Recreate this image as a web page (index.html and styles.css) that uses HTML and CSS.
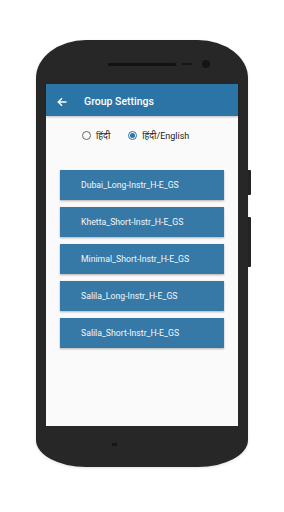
FILE: index.html
```html
<!DOCTYPE html>
<html>
<head>
<meta charset="utf-8">
<link rel="stylesheet" href="styles.css">
</head>
<body>
<div class="phone">
  <div class="speaker-row">
    <span class="speaker"></span>
    <span class="sensor"></span>
    <span class="camera"></span>
  </div>
  <span class="side-btn side-btn-1"></span>
  <span class="side-btn side-btn-2"></span>
  <div class="screen">
    <div class="appbar">
      <svg class="back" width="10" height="10" viewBox="0 0 10 10"><path d="M9.5 5H1.2M5 1.2L1.2 5L5 8.8" fill="none" stroke="#fff" stroke-width="1.4"/></svg>
      <span class="title">Group Settings</span>
    </div>
    <div class="radios">
      <label class="radio"><span class="dot"></span>हिंदी</label>
      <label class="radio"><span class="dot on"></span>हिंदी/English</label>
    </div>
    <div class="list">
      <div class="item">Dubai_Long-Instr_H-E_GS</div>
      <div class="item">Khetta_Short-Instr_H-E_GS</div>
      <div class="item">Minimal_Short-Instr_H-E_GS</div>
      <div class="item">Salila_Long-Instr_H-E_GS</div>
      <div class="item">Salila_Short-Instr_H-E_GS</div>
    </div>
  </div>
  <div class="chin"><span class="mic"></span></div>
</div>
</body>
</html>
```
FILE: styles.css
```css
html, body {
  margin: 0;
  padding: 0;
  background: #ffffff;
}
body {
  width: 284px;
  height: 512px;
  overflow: hidden;
  font-family: Roboto, "Noto Sans", "Liberation Sans", sans-serif;
}
.phone {
  position: relative;
  margin: 40px 0 0 36px;
  width: 212px;
  height: 427px;
  background: #272727;
  border-radius: 50px 50px 50px 50px / 38px 38px 27px 27px;
  display: flex;
  flex-direction: column;
  align-items: center;
  box-shadow: 0 1px 3px rgba(0,0,0,0.12);
}
.speaker-row {
  height: 44px;
  width: 100%;
  display: flex;
  align-items: center;
  padding-left: 72px;
  box-sizing: border-box;
  padding-top: 4px;
}
.speaker {
  width: 68px;
  height: 3px;
  background: #121212;
  border-radius: 1px;
}
.sensor {
  width: 10px;
  height: 2px;
  background: #141414;
  margin-left: 6px;
  border-radius: 1px;
}
.camera {
  width: 8px;
  height: 8px;
  border-radius: 50%;
  background: #151515;
  margin-left: 10px;
}
.side-btn {
  position: absolute;
  right: -3px;
  width: 3px;
  background: #232323;
  border-radius: 0 1px 1px 0;
}
.side-btn-1 { top: 130px; height: 25px; }
.side-btn-2 { top: 177px; height: 50px; }
.screen {
  width: 192px;
  height: 342px;
  background: #fafafa;
  display: flex;
  flex-direction: column;
}
.appbar {
  height: 32px;
  box-sizing: border-box;
  padding-top: 3px;
  background: #2b74a6;
  display: flex;
  align-items: center;
  color: #fff;
  box-shadow: 0 1px 2px rgba(0,0,0,0.25);
}
.back {
  margin-left: 11px;
}
.title {
  margin-left: 17px;
  font-size: 10.5px;
  font-weight: 500;
}
.radios {
  margin-top: 13px;
  height: 12px;
  display: flex;
  align-items: center;
  padding-left: 36px;
  gap: 18px;
}
.radio {
  display: flex;
  align-items: center;
  font-size: 9px;
  color: #222;
  font-family: Roboto, "Noto Sans", sans-serif;
}
.dot {
  width: 7px;
  height: 7px;
  border: 1px solid #666;
  border-radius: 50%;
  margin-right: 5px;
  box-sizing: content-box;
  display: flex;
  align-items: center;
  justify-content: center;
}
.dot.on {
  border-color: #2b74a6;
}
.dot.on::after {
  content: "";
  width: 5px;
  height: 5px;
  border-radius: 50%;
  background: #2b74a6;
}
.list {
  margin-top: 29px;
  display: flex;
  flex-direction: column;
  gap: 7px;
  padding: 0 14px;
}
.item {
  height: 30px;
  background: #3679a7;
  color: #f2f6fa;
  font-size: 8.7px;
  display: flex;
  align-items: center;
  padding-left: 21px;
  box-shadow: 0 1px 2px rgba(0,0,0,0.3);
}
.chin {
  flex: 1;
  width: 100%;
  position: relative;
}
.mic {
  position: absolute;
  left: 76px;
  top: 17px;
  width: 5px;
  height: 3px;
  background: #151515;
}
```
